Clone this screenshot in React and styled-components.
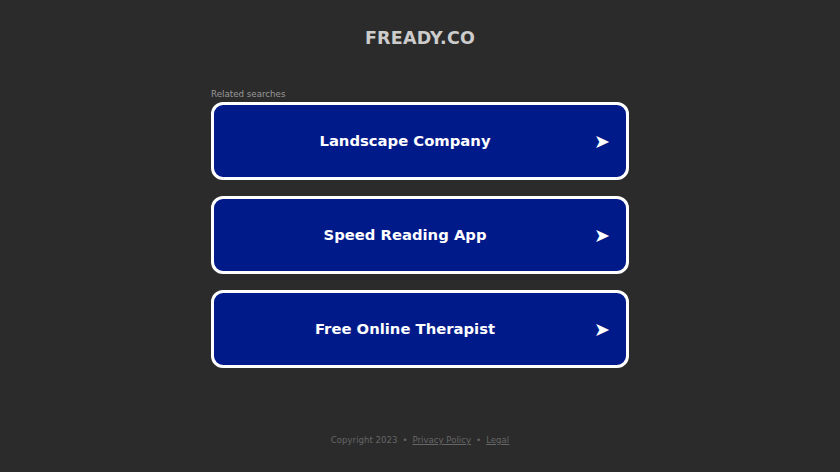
import styled, { createGlobalStyle } from 'styled-components';

const GlobalStyle = createGlobalStyle`
  html, body {
    margin: 0;
    padding: 0;
    background: #2b2b2b;
    font-family: "DejaVu Sans", "Liberation Sans", sans-serif;
  }
`;

const Page = styled.div`
  width: 840px;
  height: 472px;
  display: flex;
  flex-direction: column;
  align-items: center;
`;

const Title = styled.h1`
  margin: 28px 0 0;
  font-size: 17.5px;
  line-height: 20px;
  font-weight: bold;
  color: #cccccc;
  letter-spacing: 0.2px;
`;

const Searches = styled.div`
  margin-top: 41px;
  width: 418px;
  display: flex;
  flex-direction: column;
`;

const Label = styled.div`
  font-size: 8.7px;
  line-height: 11px;
  color: #999999;
  margin-bottom: 2px;
`;

const List = styled.div`
  display: flex;
  flex-direction: column;
  gap: 16px;
`;

const Item = styled.a`
  box-sizing: border-box;
  height: 78px;
  border: 3px solid #ffffff;
  border-radius: 12px;
  background: #011a8a;
  display: flex;
  align-items: center;
  justify-content: center;
  padding-right: 30px;
  padding-bottom: 2px;
  position: relative;
  color: #ffffff;
  font-size: 14.8px;
  font-weight: bold;
  text-decoration: none;
  cursor: pointer;
`;

const Arrow = styled.span`
  position: absolute;
  right: 16px;
  top: 50%;
  transform: translateY(-50%);
  font-size: 19px;
  line-height: 19px;
`;

const Footer = styled.div`
  margin-top: auto;
  margin-bottom: 27px;
  font-size: 8.6px;
  color: #666666;
  display: flex;
  gap: 5px;
  align-items: center;
`;

const FooterLink = styled.a`
  color: #666666;
  text-decoration: underline;
`;

const items = ['Landscape Company', 'Speed Reading App', 'Free Online Therapist'];

const App = () => (
  <>
    <GlobalStyle />
    <Page>
      <Title>FREADY.CO</Title>
      <Searches>
        <Label>Related searches</Label>
        <List>
          {items.map((item) => (
            <Item key={item}>
              {item}
              <Arrow>➤</Arrow>
            </Item>
          ))}
        </List>
      </Searches>
      <Footer>
        <span>Copyright 2023</span>
        <span>•</span>
        <FooterLink>Privacy Policy</FooterLink>
        <span>•</span>
        <FooterLink>Legal</FooterLink>
      </Footer>
    </Page>
  </>
);

export default App;
